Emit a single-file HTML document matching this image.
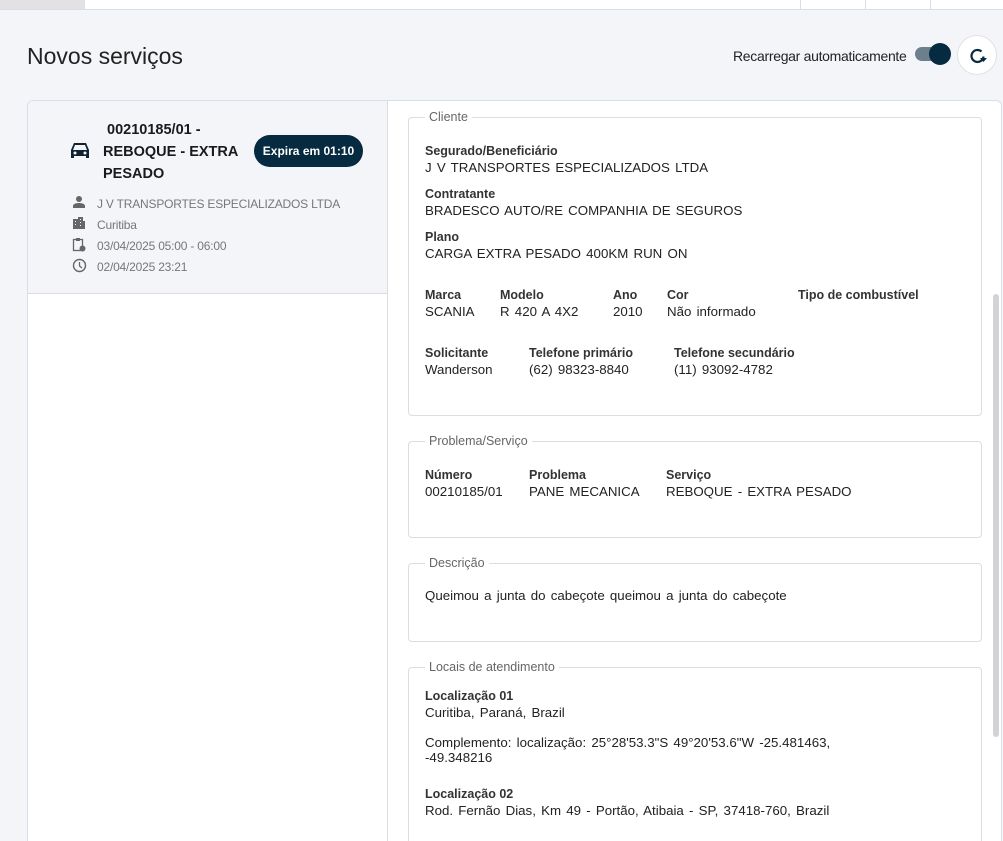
<!DOCTYPE html>
<html><head><meta charset="utf-8"><style>
*{box-sizing:border-box;margin:0;padding:0}
html,body{width:1003px;height:841px;overflow:hidden}
body{background:#f4f5f9;font-family:"Liberation Sans",sans-serif;position:relative;color:#222}
.top{position:absolute;left:0;top:0;width:1003px;height:10px;background:#fff;border-bottom:1px solid #d6deef}
.tab{position:absolute;left:0;top:0;width:85px;height:9px;background:#e3e1e1}
.vl{position:absolute;top:0;height:9px;width:1px;background:#ddd}
h1{position:absolute;left:27px;top:43px;font-size:23px;font-weight:normal;color:#222}
.rl{position:absolute;left:733px;top:48px;font-size:14px;color:#222;letter-spacing:-0.3px}
.tg{position:absolute;left:915px;top:47px;width:34px;height:14px;border-radius:7px;background:#6c7f8d}
.tg i{position:absolute;right:-2px;top:-4px;width:22px;height:22px;border-radius:50%;background:#062a40}
.rb{position:absolute;left:957px;top:35px;width:40px;height:40px;border-radius:50%;background:#fff;border:1px solid #e2e2e2}
.card{position:absolute;left:27px;top:100px;width:975px;height:760px;background:#fff;border:1px solid #d6deef;border-radius:6px;overflow:hidden}
.lp{position:absolute;left:0;top:0;width:360px;height:760px;border-right:1px solid #ddd}
.item{position:absolute;left:0;top:0;width:359px;height:193px;background:#f4f5f9;border-bottom:1px solid #ddd}
.tt{position:absolute;left:75px;top:18px;font-size:14.5px;font-weight:bold;line-height:22px;color:#1a1a1a;width:140px}
.badge{position:absolute;left:226px;top:34px;width:109px;height:32px;border-radius:16px;background:#062a40;color:#fff;font-size:12px;font-weight:bold;text-align:center;line-height:32px}
.meta{position:absolute;left:69px;font-size:12px;color:#777;letter-spacing:-0.2px}
.ic{position:absolute;left:44px}
fieldset{position:absolute;left:408px;width:574px;border:1px solid #ddd;border-radius:4px;padding:0 16px}
legend{font-size:12.5px;color:#666;padding:0 4px}
.lb{position:absolute;font-size:12.5px;font-weight:bold;color:#333}
.v{position:absolute;font-size:13.3px;color:#222;word-spacing:1.5px;white-space:nowrap}
.sb{position:absolute;left:965px;top:193px;width:6px;height:443px;border-radius:3px;background:#d3d3d3}
</style></head><body>
<div class="top"><div class="tab"></div><div class="vl" style="left:800px"></div><div class="vl" style="left:865px"></div><div class="vl" style="left:930px"></div></div>
<h1>Novos serviços</h1>
<div class="rl">Recarregar automaticamente</div>
<div class="tg"><i></i></div>
<div class="rb"><svg width="40" height="40" viewBox="0 0 40 40"><path d="M25.5 20.5a6 6 0 1 1-2-5" fill="none" stroke="#062a40" stroke-width="2.2"/><path d="M22 22h7l-3.5 4z" fill="#062a40"/></svg></div>
<div class="card">
<div class="lp"><div class="item">
<svg style="position:absolute;left:42px;top:40px" width="20" height="19" viewBox="0 0 20 19"><path d="M4 2h12l3 7v8h-3v-2H4v2H1V9z" fill="#0f2233"/><path d="M5 4h10l2 5H3z" fill="#f4f5f9"/><circle cx="5" cy="12" r="1.5" fill="#f4f5f9"/><circle cx="15" cy="12" r="1.5" fill="#f4f5f9"/></svg>
<div class="tt">&nbsp;00210185/01 - REBOQUE - EXTRA PESADO</div>
<div class="badge">Expira em 01:10</div>
<svg class="ic" style="top:94px" width="14" height="14" viewBox="0 0 14 14"><circle cx="7" cy="4" r="3" fill="#666"/><path d="M1 13v-2c0-2 3-3 6-3s6 1 6 3v2z" fill="#666"/></svg>
<div class="meta" style="top:96px">J V TRANSPORTES ESPECIALIZADOS LTDA</div>
<svg class="ic" style="top:115px" width="14" height="14" viewBox="0 0 14 14"><path d="M1 13V3h5V1h5v4h2v8z" fill="#666"/><path d="M3 5h1v1H3zM3 8h1v1H3zM8 3h1v1H8zM8 6h1v1H8zM8 9h1v1H8z" fill="#f4f5f9"/></svg>
<div class="meta" style="top:117px">Curitiba</div>
<svg class="ic" style="top:136px" width="14" height="15" viewBox="0 0 14 15"><rect x="1.5" y="2.5" width="9" height="11" fill="none" stroke="#666" stroke-width="1.3"/><rect x="4" y="1" width="4" height="3" fill="#666"/><circle cx="10.5" cy="11.5" r="3" fill="#666"/></svg>
<div class="meta" style="top:138px">03/04/2025 05:00 - 06:00</div>
<svg class="ic" style="top:157px" width="15" height="15" viewBox="0 0 15 15"><circle cx="7.5" cy="7.5" r="6" fill="none" stroke="#666" stroke-width="1.4"/><path d="M7.5 4v4l2.5 2" fill="none" stroke="#666" stroke-width="1.3"/></svg>
<div class="meta" style="top:159px">02/04/2025 23:21</div>
</div></div>
<div class="sb"></div>
</div>
<fieldset style="top:110px;height:306px"><legend>Cliente</legend>
<div class="lb" style="left:16px;top:20px">Segurado/Beneficiário</div><div class="v" style="left:16px;top:36px">J V TRANSPORTES ESPECIALIZADOS LTDA</div>
<div class="lb" style="left:16px;top:63px">Contratante</div><div class="v" style="left:16px;top:79px">BRADESCO AUTO/RE COMPANHIA DE SEGUROS</div>
<div class="lb" style="left:16px;top:106px">Plano</div><div class="v" style="left:16px;top:122px">CARGA EXTRA PESADO 400KM RUN ON</div>
<div class="lb" style="left:16px;top:164px">Marca</div><div class="v" style="left:16px;top:180px">SCANIA</div>
<div class="lb" style="left:91px;top:164px">Modelo</div><div class="v" style="left:91px;top:180px">R 420 A 4X2</div>
<div class="lb" style="left:204px;top:164px">Ano</div><div class="v" style="left:204px;top:180px">2010</div>
<div class="lb" style="left:258px;top:164px">Cor</div><div class="v" style="left:258px;top:180px">Não informado</div>
<div class="lb" style="left:389px;top:164px">Tipo de combustível</div>
<div class="lb" style="left:16px;top:222px">Solicitante</div><div class="v" style="left:16px;top:238px">Wanderson</div>
<div class="lb" style="left:120px;top:222px">Telefone primário</div><div class="v" style="left:120px;top:238px">(62) 98323-8840</div>
<div class="lb" style="left:265px;top:222px">Telefone secundário</div><div class="v" style="left:265px;top:238px">(11) 93092-4782</div>
</fieldset>
<fieldset style="top:434px;height:104px"><legend>Problema/Serviço</legend>
<div class="lb" style="left:16px;top:20px">Número</div><div class="v" style="left:16px;top:36px">00210185/01</div>
<div class="lb" style="left:120px;top:20px">Problema</div><div class="v" style="left:120px;top:36px">PANE MECANICA</div>
<div class="lb" style="left:257px;top:20px">Serviço</div><div class="v" style="left:257px;top:36px">REBOQUE - EXTRA PESADO</div>
</fieldset>
<fieldset style="top:556px;height:86px"><legend>Descrição</legend>
<div class="v" style="left:16px;top:18px">Queimou a junta do cabeçote queimou a junta do cabeçote</div>
</fieldset>
<fieldset style="top:660px;height:200px"><legend>Locais de atendimento</legend>
<div class="lb" style="left:16px;top:15px">Localização 01</div><div class="v" style="left:16px;top:31px">Curitiba, Paraná, Brazil</div>
<div class="v" style="left:16px;top:61px;line-height:15px">Complemento: localização: 25°28'53.3"S 49°20'53.6"W -25.481463,<br>-49.348216</div>
<div class="lb" style="left:16px;top:113px">Localização 02</div><div class="v" style="left:16px;top:129px">Rod. Fernão Dias, Km 49 - Portão, Atibaia - SP, 37418-760, Brazil</div>
</fieldset>
</body></html>
